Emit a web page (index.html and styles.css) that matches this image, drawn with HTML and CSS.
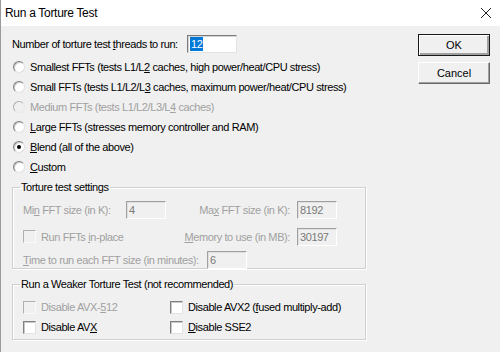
FILE: index.html
```html
<!DOCTYPE html>
<html>
<head>
<meta charset="utf-8">
<link rel="stylesheet" href="styles.css">
</head>
<body>
<div class="window">
  <div class="titlebar">
    <span class="title">Run a Torture Test</span>
    <svg class="close" width="12" height="12" viewBox="0 0 12 12"><path d="M1 1 L11 11 M11 1 L1 11" stroke="#222" stroke-width="1" fill="none"/></svg>
  </div>
  <div class="content">
    <div class="main">
      <div class="threads">
        <span class="threads-label">Number of torture test <u>t</u>hreads to run:</span>
        <span class="edit"><span class="sel">12</span></span>
      </div>
      <div class="radios">
        <div class="radio"><span class="rb"></span><span>Smallest FFTs (tests L1/L<u>2</u> caches, high power/heat/CPU stress)</span></div>
        <div class="radio"><span class="rb"></span><span>Small FFTs (tests L1/L2/L<u>3</u> caches, maximum power/heat/CPU stress)</span></div>
        <div class="radio disabled"><span class="rb"></span><span>Medium FFTs (tests L1/L2/L3/L<u>4</u> caches)</span></div>
        <div class="radio"><span class="rb"></span><span><u>L</u>arge FFTs (stresses memory controller and RAM)</span></div>
        <div class="radio"><span class="rb checked"></span><span><u>B</u>lend (all of the above)</span></div>
        <div class="radio"><span class="rb"></span><span><u>C</u>ustom</span></div>
      </div>
      <fieldset class="group settings">
        <legend>Torture test settings</legend>
        <div class="row">
          <span class="lbl w-min">Mi<u>n</u> FFT size (in K):</span>
          <span class="edit dis">4</span>
          <span class="right"><span class="lbl">Ma<u>x</u> FFT size (in K):</span><span class="edit dis">8192</span></span>
        </div>
        <div class="row">
          <span class="cb dis"></span><span class="lbl">Run FFTs <u>i</u>n-place</span>
          <span class="right"><span class="lbl"><u>M</u>emory to use (in MB):</span><span class="edit dis">30197</span></span>
        </div>
        <div class="row">
          <span class="lbl w-time"><u>T</u>ime to run each FFT size (in minutes):</span>
          <span class="edit dis">6</span>
        </div>
      </fieldset>
      <fieldset class="group weaker">
        <legend>Run a Weaker Torture Test (not recommended)</legend>
        <div class="row2">
          <span class="col"><span class="cb dis"></span><span class="lbl grey">Disable AVX-<u>5</u>12</span></span>
          <span class="col"><span class="cb"></span><span class="lbl">Disable AVX2 (<u>f</u>used multiply-add)</span></span>
        </div>
        <div class="row2">
          <span class="col"><span class="cb"></span><span class="lbl">Disable AV<u>X</u></span></span>
          <span class="col"><span class="cb"></span><span class="lbl"><u>D</u>isable SSE2</span></span>
        </div>
      </fieldset>
    </div>
    <div class="buttons">
      <div class="btn default">OK</div>
      <div class="btn">Cancel</div>
    </div>
  </div>
</div>
</body>
</html>
```
FILE: styles.css
```css
* { box-sizing: border-box; }
html, body { margin: 0; padding: 0; }
body {
  width: 500px;
  height: 352px;
  overflow: hidden;
  font-family: "Liberation Sans", Arial, sans-serif;
  font-size: 11px;
  letter-spacing: -0.4px;
  color: #000;
  white-space: nowrap;
}
u { text-decoration: underline; text-underline-offset: 1px; }
.window {
  width: 500px;
  height: 352px;
  background: #f0f0f0;
  border-left: 1px solid #9a9a9a;
  display: flex;
  flex-direction: column;
}
.titlebar {
  height: 26px;
  background: #fff;
  display: flex;
  align-items: center;
  padding-left: 4px;
  padding-right: 8px;
}
.title {
  font-family: "Liberation Sans", Arial, sans-serif;
  font-size: 12px;
  letter-spacing: -0.3px;
  flex: 1;
}
.close { display: block; }
.content {
  flex: 1;
  display: flex;
  padding-left: 11px;
}
.main {
  width: 354px;
  flex: none;
  display: flex;
  flex-direction: column;
}
.threads {
  margin-top: 9px;
  height: 18px;
  display: flex;
  align-items: center;
}
.threads-label { width: 175px; flex: none; }
.edit {
  width: 50px;
  height: 18px;
  flex: none;
  background: #fff;
  border-style: solid;
  border-width: 1px;
  border-color: #7a7a7a #e3e3e3 #e3e3e3 #7a7a7a;
  box-shadow: inset 1px 1px 0 #d4d4d4;
  display: flex;
  align-items: center;
  padding-left: 2px;
}
.sel {
  background: #0078d7;
  color: #fff;
  padding: 0 1px;
  line-height: 14px;
}
.radios {
  margin-top: 4px;
  display: flex;
  flex-direction: column;
}
.radio {
  height: 20px;
  display: flex;
  align-items: center;
  gap: 5px;
  padding-left: 1px;
}
.radio.disabled { color: #a0a0a0; }
.rb {
  width: 12px;
  height: 12px;
  flex: none;
  border-radius: 50%;
  background: #fff;
  border: 1px solid;
  border-color: #808080 #e0e0e0 #e0e0e0 #808080;
  box-shadow: inset 1px 1px 0 #c8c8c8;
  position: relative;
}
.radio.disabled .rb { background: #f0f0f0; border-color: #b0b0b0 #e8e8e8 #e8e8e8 #b0b0b0; box-shadow: none; }
.rb.checked::after {
  content: "";
  position: absolute;
  left: 3px;
  top: 3px;
  width: 4px;
  height: 4px;
  border-radius: 50%;
  background: #000;
}
.group {
  margin: 0;
  border: 1px solid #d0d0d0;
  box-shadow: 1px 1px 0 #fff, inset 1px 1px 0 #fff;
  padding: 0 28px 0 10px;
}
.group legend {
  padding: 0 1px;
  margin-left: -3px;
  color: #000;
  line-height: 13px;
}
.settings {
  margin-top: 4px;
  height: 88px;
  color: #a0a0a0;
}
.settings .row {
  height: 27px;
  display: flex;
  align-items: center;
}
.settings .row:first-of-type { margin-top: 3px; height: 26px; }
.settings .row:last-child { height: 20px; }
.settings .edit {
  width: 40px;
  background: #f0f0f0;
  color: #7a7a7a;
  border-color: #a0a0a0 #fff #fff #a0a0a0;
  box-shadow: inset 1px 1px 0 #e0e0e0;
}
.w-min { width: 103px; flex: none; }
.w-time { width: 184px; flex: none; }
.right {
  margin-left: auto;
  display: flex;
  align-items: center;
  gap: 7px;
}
.cb {
  width: 13px;
  height: 13px;
  background: #fff;
  border: 1px solid;
  border-color: #808080 #e3e3e3 #e3e3e3 #808080;
  box-shadow: inset 1px 1px 0 #c8c8c8;
  margin-right: 5px;
  flex: none;
}
.cb.dis {
  background: #f0f0f0;
  border-color: #b0b0b0 #fafafa #fafafa #b0b0b0;
  box-shadow: none;
}
.weaker {
  margin-top: 9px;
  height: 62px;
}
.row2 {
  height: 20px;
  display: flex;
  align-items: center;
}
.row2:first-of-type { margin-top: 6px; }
.col {
  display: flex;
  align-items: center;
  width: 147px;
  flex: none;
}
.grey { color: #a0a0a0; }
.buttons {
  margin-left: 52px;
  margin-top: 8px;
  display: flex;
  flex-direction: column;
  gap: 6px;
}
.btn {
  width: 72px;
  height: 22px;
  border: 1px solid;
  border-color: #fff #696969 #696969 #fff;
  box-shadow: inset -1px -1px 0 #a0a0a0;
  background: #f0f0f0;
  display: flex;
  align-items: center;
  justify-content: center;
  letter-spacing: 0;
}
.btn.default {
  outline: 1px solid #1a1a1a;
  outline-offset: -1px;
  box-shadow: inset 1px 1px 0 #fff, inset -2px -2px 0 #a0a0a0;
}
```
